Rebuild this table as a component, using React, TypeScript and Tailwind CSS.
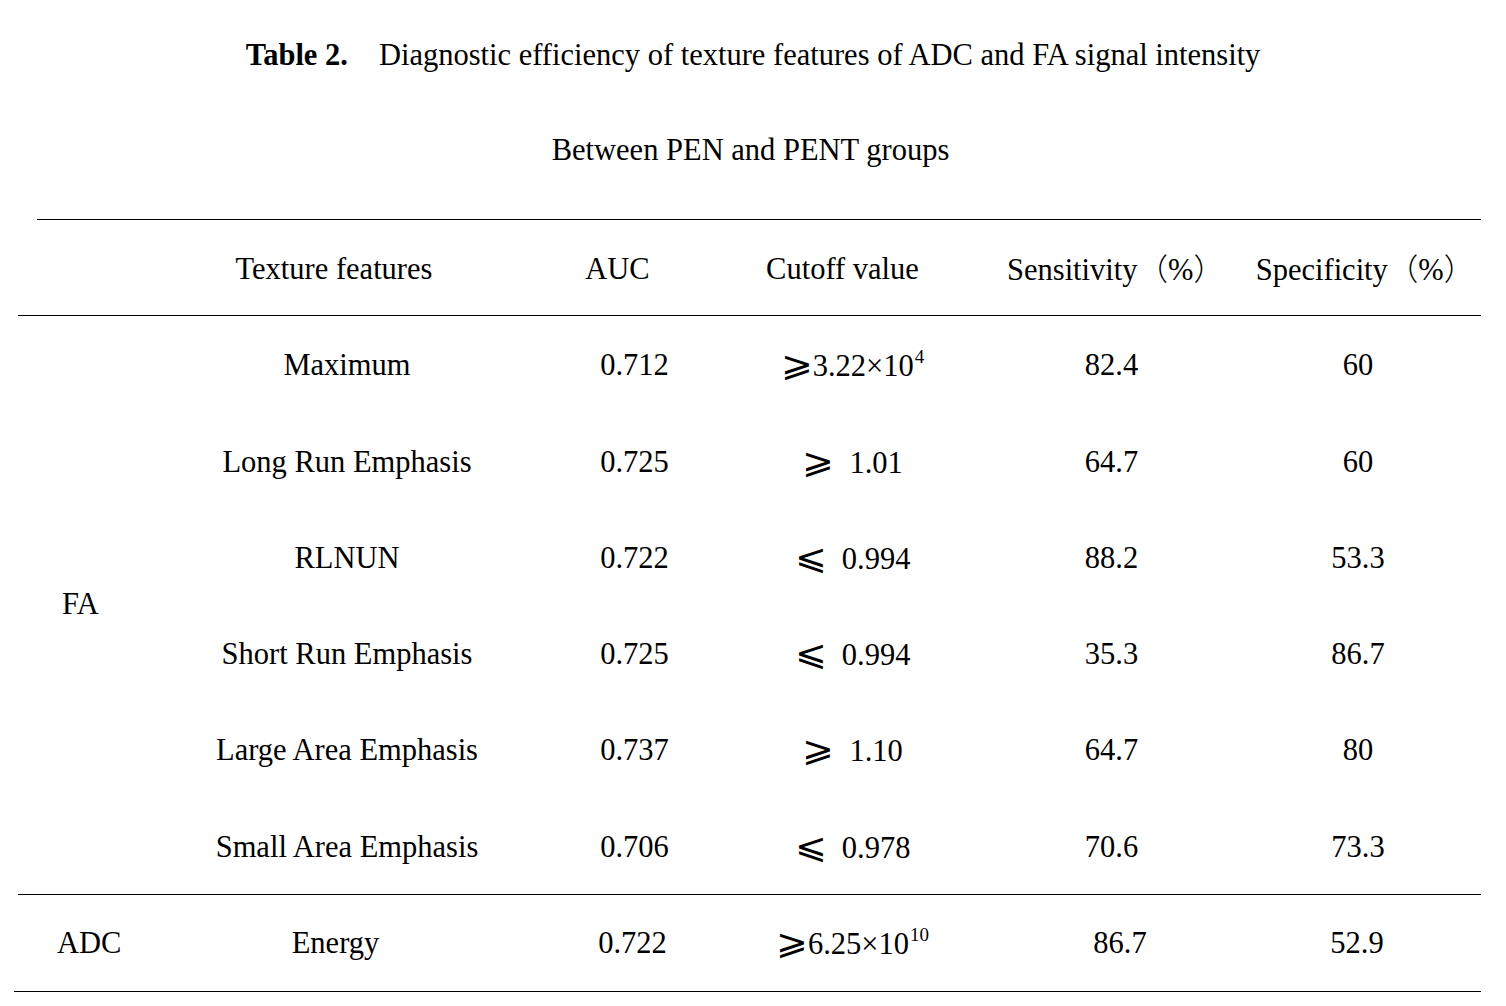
const symCls = "inline-block text-[38px] leading-none align-[-1px] scale-y-[0.92]"
const symFont = { fontFamily: '"Noto Sans CJK SC", "DejaVu Sans", sans-serif', fontWeight: 100 }
const Ge = () => <span className={symCls} style={symFont}>⩾</span>
const Le = () => <span className={symCls} style={symFont}>⩽</span>
const Sup = ({ children }: { children: string }) => <sup className="text-[19px] -top-[13px] ml-[1px]">{children}</sup>
const Paren = ({ children }: { children: string }) => <span style={{ fontFamily: '"Noto Sans CJK SC", sans-serif' }} className="font-light">{children}</span>

const rows = [
  { name: "Maximum", auc: "0.712", cut: <><Ge />3.22×10<Sup>4</Sup></>, sen: "82.4", spe: "60" },
  { name: "Long Run Emphasis", auc: "0.725", cut: <><Ge />&nbsp; 1.01</>, sen: "64.7", spe: "60" },
  { name: "RLNUN", auc: "0.722", cut: <><Le />&nbsp; 0.994</>, sen: "88.2", spe: "53.3" },
  { name: "Short Run Emphasis", auc: "0.725", cut: <><Le />&nbsp; 0.994</>, sen: "35.3", spe: "86.7" },
  { name: "Large Area Emphasis", auc: "0.737", cut: <><Ge />&nbsp; 1.10</>, sen: "64.7", spe: "80" },
  { name: "Small Area Emphasis", auc: "0.706", cut: <><Le />&nbsp; 0.978</>, sen: "70.6", spe: "73.3" },
]

const cols = "grid grid-cols-[125px_410px_15px_151px_269px_249px_244px]"

const App = () => {
  return (
    <div
      className="w-[1506px] min-h-[1006px] bg-white text-black text-[30.5px]"
      style={{ fontFamily: '"Liberation Serif", "Times New Roman", serif' }}
    >
      <div className="pt-[35px] flex flex-col items-center">
        <h1 className="leading-[40px]">
          <span className="font-bold">Table 2.</span>
          <span className="ml-[31px]">Diagnostic efficiency of texture features of ADC and FA signal intensity</span>
        </h1>
        <h2 className="leading-[40px] mt-[55px] pr-[5px]">Between PEN and PENT groups</h2>
      </div>

      <div className="ml-[18px] w-[1463px] mt-[49px]">
        <div className="ml-[19px] h-px bg-black" />
        {/* header */}
        <div className={`${cols} h-[95px] items-center pt-[4px]`}>
          <div />
          <div className="text-center pr-[28px]">Texture features</div>
          <div />
          <div className="text-center pr-[52px]">AUC</div>
          <div className="text-center pr-[22px]">Cutoff value</div>
          <div className="text-center pl-[6px]">Sensitivity<Paren>（</Paren>%<Paren>）</Paren></div>
          <div className="text-center pl-[12px]">Specificity<Paren>（</Paren>%<Paren>）</Paren></div>
        </div>
        <div className="h-px bg-black" />

        {/* FA group */}
        <div className="flex">
          <div className="w-[125px] flex items-center pl-[44px]">FA</div>
          <div className="flex-1 flex flex-col">
            {rows.map((r) => (
              <div key={r.name} className="grid grid-cols-[410px_15px_151px_269px_249px_244px] h-[96.3px] items-center pt-[4px]">
                <div className="text-center pr-[2px]">{r.name}</div>
                <div />
                <div className="text-center pr-[18px]">{r.auc}</div>
                <div className="text-center pr-[2px]">{r.cut}</div>
                <div className="text-center pr-[2px]">{r.sen}</div>
                <div className="text-center pr-[2px]">{r.spe}</div>
              </div>
            ))}
          </div>
        </div>
        <div className="h-px bg-black" />

        {/* ADC */}
        <div className={`${cols} h-[96px] items-center pt-[2px]`}>
          <div className="pl-[39px]">ADC</div>
          <div className="text-center pr-[25px]">Energy</div>
          <div />
          <div className="text-center pr-[22px]">0.722</div>
          <div className="text-center pr-[2px]"><Ge />6.25×10<Sup>10</Sup></div>
          <div className="text-center pl-[15px]">86.7</div>
          <div className="text-center pr-[4px]">52.9</div>
        </div>
        <div className="-ml-[4px] h-px bg-black" />
      </div>
    </div>
  )
}

export default App
